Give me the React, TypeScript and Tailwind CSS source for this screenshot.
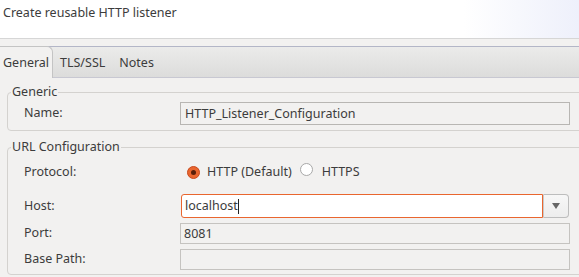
import React from "react";

const font = { fontFamily: '"Noto Sans", "Open Sans", sans-serif' };

const Radio = ({ checked }: { checked?: boolean }) =>
  checked ? (
    <span className="inline-flex w-[13px] h-[13px] rounded-full bg-[#e9662f] border border-[#c9491c] items-center justify-center">
      <span className="w-[5px] h-[5px] rounded-full bg-[#5a1f0a]" />
    </span>
  ) : (
    <span className="inline-block w-[13px] h-[13px] rounded-full bg-white border border-[#a8a8a8]" />
  );

const Row = ({ label, children, h }: { label: string; children: React.ReactNode; h: string }) => (
  <div className={`flex items-center ${h}`}>
    <div className="w-[172px] pl-4 text-[12.5px] text-[#3c3c3c]">{label}</div>
    <div className="flex-1">{children}</div>
  </div>
);

const Group = ({ title, children, cls }: { title: string; children: React.ReactNode; cls: string }) => (
  <div className={`relative ml-[7px] -mr-2 border border-[#d4d2cf] rounded-[4px] ${cls}`}>
    <span className="absolute -top-[10px] left-[3px] px-[1px] bg-[#f2f1f0] text-[12.5px] leading-[18px] text-[#3c3c3c]">
      {title}
    </span>
    {children}
  </div>
);

export default function App() {
  return (
    <div className="w-[579px] h-[277px] overflow-hidden bg-[#f2f1f0] text-[#3c3c3c]" style={font}>
      <div className="h-[39px] bg-white border-b border-[#d6d6d6] bg-gradient-to-r from-white from-80% to-[#eef0fb]">
        <div className="pl-[3px] pt-[3px] text-[12.5px] leading-[20px]">Create reusable HTTP listener</div>
      </div>
      <div className="h-[7px] bg-[#f2f1f0]" />
      <div className="relative h-[32px] flex items-end border-t border-[#b3b6c7] border-b border-b-[#c8c8d2] bg-gradient-to-b from-[#ebebea] to-[#dcdcdb] text-[12.5px]">
        <div className="relative -mb-[1px] h-[32px] w-[53px] -mt-[1px] bg-[#f2f1f0] border border-l-0 border-b-0 border-[#c4c4c4] rounded-tr-[6px] flex items-center pl-[3px] pt-[2px]">
          General
        </div>
        <div className="h-full flex items-center pl-[7px] pt-[2px]">TLS/SSL</div>
        <div className="h-full flex items-center pl-[14px] pt-[2px]">Notes</div>
      </div>
      <div className="pt-[14px]">
        <Group title="Generic" cls="h-[39px] pt-[9px]">
          <Row label="Name:" h="h-[23px]">
            <div className="w-[390px] h-[23px] border border-[#b8b6b3] bg-[#f2f1f0] pl-[4px] text-[12.5px] leading-[21px]">
              HTTP_Listener_Configuration
            </div>
          </Row>
        </Group>
        <Group title="URL Configuration" cls="mt-[16px] h-[128px] pt-[12px]">
          <Row label="Protocol:" h="h-[24px]">
            <div className="flex items-center text-[12.5px] pl-[7px]">
              <Radio checked />
              <span className="ml-[7px]">HTTP (Default)</span>
              <span className="ml-[8px]"><Radio /></span>
              <span className="ml-[9px]">HTTPS</span>
            </div>
          </Row>
          <Row label="Host:" h="mt-[10px] h-[24px]">
            <div className="flex w-[388px] h-[24px] ml-[1px]">
              <div className="flex-1 h-full border border-[#e9662f] rounded-l-[3px] bg-white pl-[3px] text-[12.5px] leading-[22px] flex items-center">
                localhost<span className="inline-block w-[1px] h-[15px] bg-[#222]" />
              </div>
              <div className="w-[26px] h-full border border-l-[#c9c9c9] border-[#bdbdbd] rounded-r-[4px] bg-gradient-to-b from-[#f7f7f7] to-[#ededed] flex items-center justify-center">
                <svg width="8" height="6" viewBox="0 0 8 6"><path d="M0 0h8L4 6z" fill="#666" /></svg>
              </div>
            </div>
          </Row>
          <Row label="Port:" h="mt-[5px] h-[21px]">
            <div className="w-[390px] h-[21px] border border-[#c5c3c0] bg-[#f2f1f0] pl-[3px] text-[12.5px] leading-[19px]">8081</div>
          </Row>
          <Row label="Base Path:" h="mt-[5px] h-[21px]">
            <div className="w-[390px] h-[21px] border border-[#c5c3c0] bg-[#f2f1f0]" />
          </Row>
        </Group>
      </div>
    </div>
  );
}
